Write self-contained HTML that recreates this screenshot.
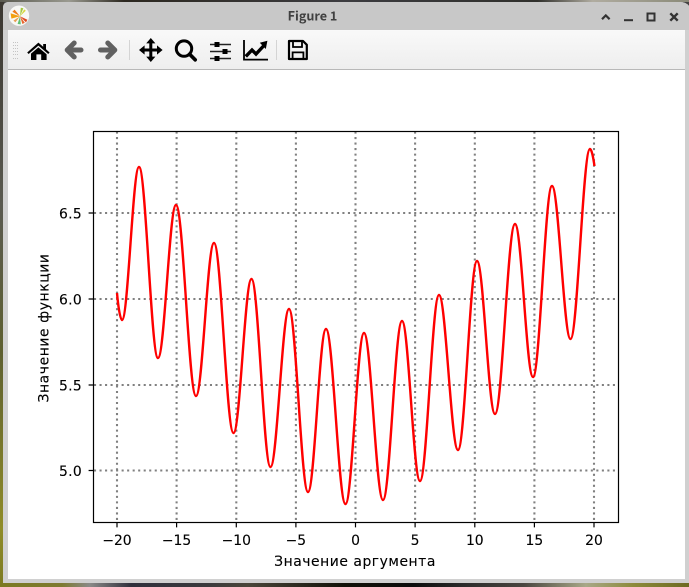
<!DOCTYPE html>
<html>
<head>
<meta charset="utf-8">
<style>
html,body{margin:0;padding:0;background:#fff}
body{width:689px;height:587px;overflow:hidden;position:relative}
svg{position:absolute;left:0;top:0;display:block}
text{font-family:"DejaVu Sans",sans-serif;font-size:13.9px;fill:#000;stroke:#000;stroke-width:.12px}
</style>
</head>
<body>
<svg width="689" height="587" viewBox="0 0 689 587" xmlns="http://www.w3.org/2000/svg">
<defs>
<linearGradient id="wl" x1="0" y1="0" x2="0" y2="1">
<stop offset="0" stop-color="#3a3630"/><stop offset=".35" stop-color="#5a5a50"/><stop offset=".6" stop-color="#5e6030"/><stop offset=".9" stop-color="#8f8c28"/><stop offset="1" stop-color="#7c7a22"/>
</linearGradient>
<linearGradient id="wb" x1="0" y1="0" x2="1" y2="0">
<stop offset="0" stop-color="#7c7a22"/><stop offset=".09" stop-color="#7d7a30"/><stop offset=".13" stop-color="#8a8a88"/><stop offset=".19" stop-color="#30303c"/><stop offset=".3" stop-color="#3a3a3c"/><stop offset=".36" stop-color="#4a463a"/><stop offset=".5" stop-color="#111108"/><stop offset=".6" stop-color="#0c0c0c"/><stop offset=".67" stop-color="#2a2a2a"/><stop offset=".76" stop-color="#4a4640"/><stop offset=".85" stop-color="#a8a888"/><stop offset=".92" stop-color="#8c8a3a"/><stop offset="1" stop-color="#6c6a22"/>
</linearGradient>
<linearGradient id="wt" x1="0" y1="0" x2="1" y2="0">
<stop offset="0" stop-color="#5a5a50"/><stop offset=".1" stop-color="#9a9a90"/><stop offset=".18" stop-color="#2c2820"/><stop offset=".5" stop-color="#3c3c40"/><stop offset=".78" stop-color="#30302c"/><stop offset=".86" stop-color="#b0aca0"/><stop offset="1" stop-color="#8a8a78"/>
</linearGradient>
<linearGradient id="tb" x1="0" y1="0" x2="0" y2="1">
<stop offset="0" stop-color="#f9f9f9"/><stop offset="1" stop-color="#eeeeee"/>
</linearGradient>
</defs>

<!-- wallpaper -->
<rect width="689" height="587" fill="#444"/>
<rect x="0" y="0" width="4" height="587" fill="url(#wl)"/>
<rect x="0" y="583" width="689" height="4" fill="url(#wb)"/>
<rect x="0" y="0" width="689" height="2" fill="url(#wt)"/>

<!-- window frame -->
<path d="M3 8Q3 2 9 2H680Q686 2 689 6V583H3Z" fill="#d0d0d0"/>
<path d="M3 8Q3 2 9 2H680Q686 2 689 6V30H3Z" fill="#c8c8c8"/>
<rect x="8" y="30" width="677" height="39" fill="url(#tb)"/>
<rect x="8" y="69" width="677" height="1" fill="#b8b8b8"/>
<rect x="8" y="70" width="677" height="509" fill="#fff"/>

<!-- app icon -->
<circle cx="19" cy="15.7" r="10.2" fill="#f8f8f6"/>
<path d="M20 16.2L10.6 13.2L11.4 18.6Z" fill="#f2a010"/>
<path d="M20 16.2L14.6 9.6L12.4 11.8Z" fill="#ee7c18"/>
<path d="M20 16.2L23.4 8.2L20.8 7.8Z" fill="#a4c840"/>
<path d="M20 16.2L25.8 10.8L24.2 9.4Z" fill="#d8d840"/>
<path d="M20 16.2L26 22.4L27.4 19.8Z" fill="#e04820"/>
<path d="M20 16.2L22.4 24L24.8 22.8Z" fill="#e86830"/>
<path d="M20 16.2L17.6 24L20.8 24.4Z" fill="#60c070"/>
<path d="M20 16.2L13.4 20.6L15.4 22.2Z" fill="#e8a050"/>

<!-- title -->
<text x="312.5" y="20.5" text-anchor="middle" style="font-family:'Noto Sans CJK JP','DejaVu Sans',sans-serif;font-size:12.6px;font-weight:700;fill:#404040;stroke:none">Figure 1</text>

<!-- window buttons -->
<path d="M602 19.2L605.8 15.4L609.6 19.2" fill="none" stroke="#333" stroke-width="2.2"/>
<rect x="624" y="19.2" width="9" height="2" fill="#333"/>
<rect x="647.5" y="13.5" width="7" height="7" fill="none" stroke="#333" stroke-width="2"/>
<path d="M670.3 13.3L677.7 20.7M677.7 13.3L670.3 20.7" fill="none" stroke="#333" stroke-width="2.4"/>

<!-- grip -->
<g fill="#c4c4c4">
<rect x="13" y="42" width="1" height="1"/><rect x="15" y="42" width="1" height="1"/><rect x="17" y="42" width="1" height="1"/>
<rect x="13" y="45" width="1" height="1"/><rect x="15" y="45" width="1" height="1"/><rect x="17" y="45" width="1" height="1"/>
<rect x="13" y="48" width="1" height="1"/><rect x="15" y="48" width="1" height="1"/><rect x="17" y="48" width="1" height="1"/>
<rect x="13" y="51" width="1" height="1"/><rect x="15" y="51" width="1" height="1"/><rect x="17" y="51" width="1" height="1"/>
<rect x="13" y="54" width="1" height="1"/><rect x="15" y="54" width="1" height="1"/><rect x="17" y="54" width="1" height="1"/>
<rect x="13" y="58" width="1" height="1"/><rect x="15" y="58" width="1" height="1"/><rect x="17" y="58" width="1" height="1"/>
</g>

<!-- home -->
<path d="M38.4 42.6L43.2 46.8V44H46V49.3L49.6 52.5L48.2 54L38.4 45.6L28.6 54L27.2 52.5Z" fill="#000"/>
<path d="M31 53.6L38.4 47.4L46.6 54.2V60H41.2V54.4H36.4V60H31Z" fill="#000"/>

<!-- back / forward -->
<path d="M81 50H67.5M74.2 43L67.2 50L74.2 57" fill="none" stroke="#616161" stroke-width="5" stroke-linecap="round" stroke-linejoin="round"/>
<path d="M100.5 50H114.5M107.8 43L114.8 50L107.8 57" fill="none" stroke="#616161" stroke-width="5" stroke-linecap="round" stroke-linejoin="round"/>

<!-- separators -->
<rect x="129" y="40" width="1" height="20" fill="#d4d4d4"/>
<rect x="276" y="40" width="1" height="20" fill="#d4d4d4"/>

<!-- move -->
<path d="M144 50H157.5M150.8 43V57" fill="none" stroke="#000" stroke-width="3"/>
<path d="M150.8 38L155.4 43.4H146.2ZM150.8 62L146.2 56.6H155.4ZM139 50L144.6 45.4V54.6ZM162.6 50L157 54.6V45.4Z" fill="#000"/>

<!-- zoom -->
<circle cx="184" cy="48.6" r="7.7" fill="none" stroke="#000" stroke-width="3"/>
<path d="M189.6 54.2L195.2 59.8" fill="none" stroke="#000" stroke-width="3.6" stroke-linecap="round"/>

<!-- sliders -->
<path d="M210 44.5H231M210 51.5H231M210 58.5H231" fill="none" stroke="#222" stroke-width="1.6"/>
<rect x="214.5" y="42" width="5" height="5" fill="#000"/>
<rect x="222.5" y="49" width="5" height="5" fill="#000"/>
<rect x="214.5" y="56" width="5" height="5" fill="#000"/>

<!-- chart -->
<path d="M244 40V59.6H268" fill="none" stroke="#000" stroke-width="1.8"/>
<path d="M245.8 56.4L252 50L256 54L263.5 46" fill="none" stroke="#000" stroke-width="3.4"/>
<path d="M259.8 42.8L267.4 40.8L265.8 49Z" fill="#000"/>

<!-- save -->
<path d="M289 41H303L306.8 44.8V59H289Z" fill="none" stroke="#000" stroke-width="2.2" stroke-linejoin="round"/>
<path d="M293 41V47H302V41" fill="none" stroke="#000" stroke-width="1.8"/>
<path d="M292.6 59V52.4H303.4V59" fill="none" stroke="#000" stroke-width="1.8"/>

<!-- grid -->
<g fill="none" stroke="#808080" stroke-width="2.08" stroke-dasharray="2.08 3.44">
<path d="M117 131.5V522M176.6 131.5V522M236.3 131.5V522M295.9 131.5V522M355.5 131.5V522M415.1 131.5V522M474.8 131.5V522M534.4 131.5V522M594 131.5V522"/>
<path d="M94 213H618M94 299H618M94 385H618M94 470.5H618"/>
</g>

<!-- curve -->
<path fill="none" stroke="#ff0000" stroke-width="2.4" stroke-linejoin="round" d="M117 293C118 304 120 320 122 320C128.2 320 132.8 167 139 167C145.9 167 151.1 358 158 358C164.6 358 169.4 205 176 205C183.3 205 188.7 396 196 396C202.6 396 207.4 243 214 243C221.1 243 226.4 433 233.5 433C240.1 433 244.9 279 251.5 279C258.4 279 263.6 467 270.5 467C277.2 467 282.3 309 289 309C295.9 309 301.1 492 308 492C314.6 492 319.4 329 326 329C333.1 329 338.4 504 345.5 504C352.2 504 357.3 333 364 333C370.9 333 376.1 500 383 500C389.9 500 395.1 321 402 321C408.6 321 413.4 481 420 481C426.9 481 432.1 295 439 295C445.9 295 451.1 450 458 450C464.9 450 470.1 261 477 261C483.6 261 488.4 414 495 414C502.3 414 507.7 224 515 224C521.6 224 526.4 377 533 377C539.9 377 545.1 186 552 186C558.7 186 563.8 339 570.5 339C577.6 339 582.9 149 590 149C591.5 149 593 156 594.5 166"/>

<!-- axes -->
<rect x="93.5" y="131.5" width="525" height="391" fill="none" stroke="#000" stroke-width="1.2"/>
<!-- ticks -->
<path d="M117 522.5V527.4M176.6 522.5V527.4M236.3 522.5V527.4M295.9 522.5V527.4M355.5 522.5V527.4M415.1 522.5V527.4M474.8 522.5V527.4M534.4 522.5V527.4M594 522.5V527.4M93.5 213H88.6M93.5 299H88.6M93.5 385H88.6M93.5 470.5H88.6" stroke="#000" stroke-width="1.2" fill="none"/>

<!-- tick labels -->
<g text-anchor="middle">
<text x="117" y="545">−20</text>
<text x="176.6" y="545">−15</text>
<text x="236.3" y="545">−10</text>
<text x="295.9" y="545">−5</text>
<text x="355.5" y="545">0</text>
<text x="415.1" y="545">5</text>
<text x="474.8" y="545">10</text>
<text x="534.4" y="545">15</text>
<text x="594" y="545">20</text>
</g>
<g text-anchor="end">
<text x="82" y="218.5" letter-spacing=".3">6.5</text>
<text x="82" y="304.5" letter-spacing=".3">6.0</text>
<text x="82" y="390.5" letter-spacing=".3">5.5</text>
<text x="82" y="476" letter-spacing=".3">5.0</text>
</g>
<text x="355" y="566" text-anchor="middle" letter-spacing=".55">Значение аргумента</text>
<text transform="translate(48.5 328) rotate(-90)" text-anchor="middle" letter-spacing=".6">Значение функции</text>
</svg>
</body>
</html>
